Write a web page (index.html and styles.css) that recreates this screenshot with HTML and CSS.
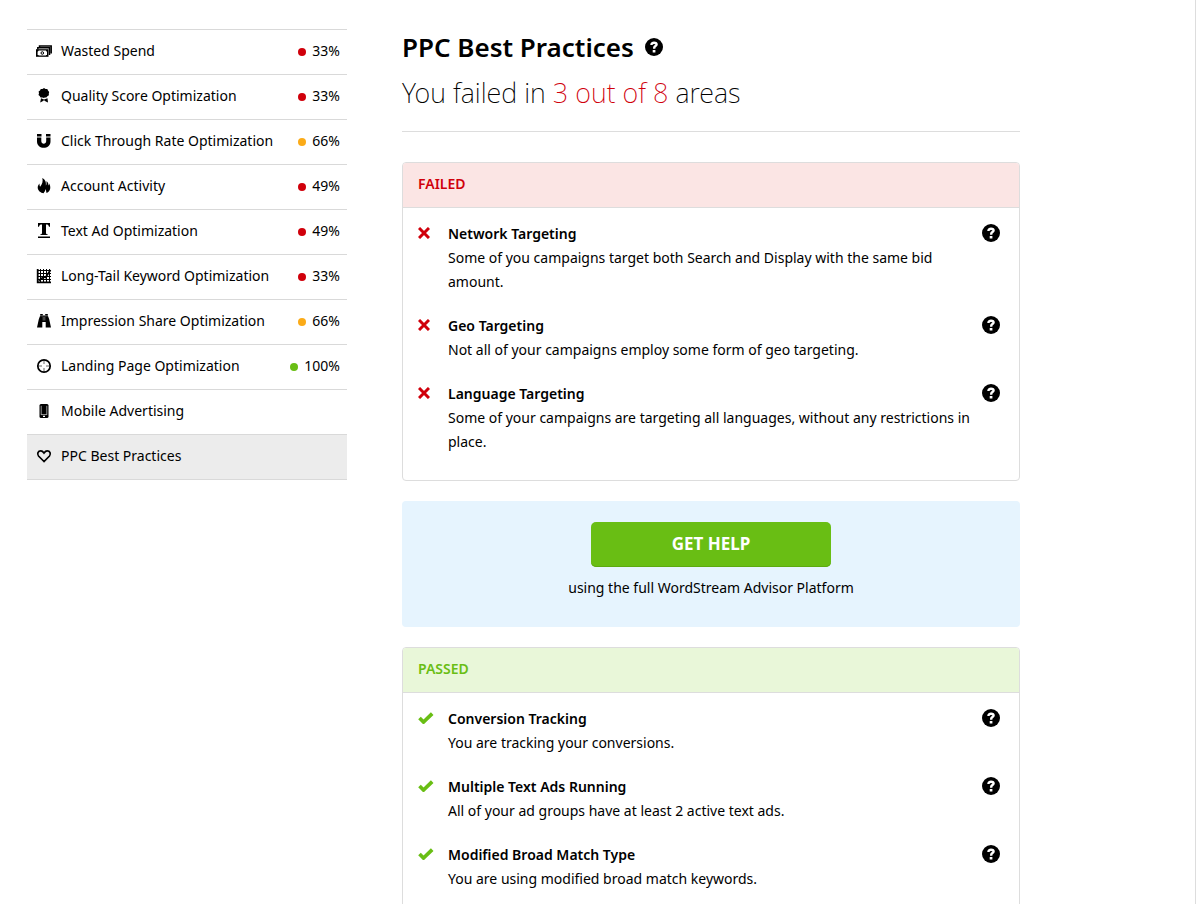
FILE: index.html
```html
<!DOCTYPE html>
<html lang="en">
<head>
<meta charset="utf-8">
<title>PPC Best Practices</title>
<link rel="stylesheet" href="styles.css">
</head>
<body>
<svg class="sprite" aria-hidden="true">
  <symbol id="help" viewBox="0 0 18 18"><circle cx="9" cy="9" r="9"/><path d="M6.500 7V6.600C6.500 5.200 7.600 4.700 9 4.700s2.600.6 2.600 1.900c0 1.500-2.400 1.500-2.400 3.300v.8" fill="none" stroke="#fff" stroke-width="2.400"/><path d="M7.700 12h2.700v2.500H7.700z" fill="#fff"/></symbol>
  <symbol id="cross" viewBox="0 0 12 12"><path d="M1 1l10 10M11 1L1 11" stroke="currentColor" stroke-width="3"/></symbol>
  <symbol id="check" viewBox="0 0 16 12"><path d="M1.500 6l4 4L14.200 1.600" fill="none" stroke="currentColor" stroke-width="3.700"/></symbol>
</svg>
<div class="page">
  <nav class="sidebar" aria-label="Report sections">
    <a class="row" href="#"><svg class="icon" viewBox="0 0 16 16"><path d="M3.500 4.500V3H15.200V10.500M1.800 6.500V4.800H13.500V12" fill="none" stroke="currentColor" stroke-width="1.500"/><path d="M0 6.200h12.500v7.600H0z"/><path d="M2.800 7.500h7l1.200 1.200v2.600l-1.200 1.200h-7l-1.200-1.200V8.700z" fill="#fff"/><circle cx="6.300" cy="10" r="1.300" fill="none" stroke="currentColor"/></svg><span class="name">Wasted Spend</span><span class="score bad">33%</span></a>
    <a class="row" href="#"><svg class="icon" viewBox="0 0 16 16"><path d="M8 0l1.500.9 1.800.1.700 1.600L13.200 4l-.4 1.600.1 1.700-1.500 1-1.100 1.300-1.600-.2L8 10l-1.700-.6-1.700.1-.9-1.400-1.200-1.100L3 5.300l-.4-1.700L4 2.600 4.800 1l1.700-.1z"/><path d="M5 10.300l3 1.200 3.500-1.200.5 4.200-2.200-1L8 12.300l-1.800 1.200-2 1z"/></svg><span class="name">Quality Score Optimization</span><span class="score bad">33%</span></a>
    <a class="row" href="#"><svg class="icon" viewBox="0 0 16 16"><path d="M1 1h4.500v2.500H1zM10 1h4.500v2.500H10z"/><path d="M1 4.500h4.300v3.500c0 3.600 4.900 3.600 4.900 0V4.500h4.300v4c0 8.400-13.500 8.400-13.500 0z"/></svg><span class="name">Click Through Rate Optimization</span><span class="score fair">66%</span></a>
    <a class="row" href="#"><svg class="icon" viewBox="0 0 16 16"><path d="M6.300 0c3.500 2 3.800 4.500 3.600 7.400.8-.7.7-2.600.5-4.200 1.900 1 1.800 2.500 1.600 4.200.8-.4.9-1.500.8-2.300 2.500 3.600 2 8.200-2.200 10-.5-1.300-.4-2.600-1-4-.3 2-1.300 3.100-2 4.200-2.900-.3-6-2.700-5.900-6 .1-1.500.9-2.700 1.600-3.900.4 1.100.2 2.300.8 3.400C6.200 6.300 7.200 3.500 6.300 0z"/></svg><span class="name">Account Activity</span><span class="score bad">49%</span></a>
    <a class="row" href="#"><svg class="icon" viewBox="0 0 16 16"><path d="M2 0h12v3.800h-1c-.4-1.900-1-2.300-3-2.300V10c0 .9.500 1.200 1.600 1.300v.7H4.400v-.7c1.100-.1 1.600-.4 1.600-1.300V1.500c-2 0-2.600.4-3 2.300H2zM2 13.500h12V15H2z"/></svg><span class="name">Text Ad Optimization</span><span class="score bad">49%</span></a>
    <a class="row" href="#"><svg class="icon" viewBox="0 0 16 16"><path d="M1.500 1v14M4.500 1v14M7.500 1v14M10.500 1v14M13.500 1v14M1 2.500h14M1 5.500h14M1 8.500h14M1 11.500h14" stroke="currentColor"/><path d="M1.700 1v13.300H15M3 12.500l4.500-3.500 2 .5L14.500 2" fill="none" stroke="currentColor" stroke-width="1.800"/></svg><span class="name">Long-Tail Keyword Optimization</span><span class="score bad">33%</span></a>
    <a class="row" href="#"><svg class="icon" viewBox="0 0 16 16"><path d="M4.200 1h2.600v1.500h2.400V1h2.600v1.500l1.400 3.700L15 14.500H9.700V9H6.300v5.500H1l1.800-8.300 1.400-3.700z"/><path d="M4 2.800h3M9 2.800h3M7.200 3.500v4M8.800 3.500v4" stroke="#fff" stroke-width=".4"/></svg><span class="name">Impression Share Optimization</span><span class="score fair">66%</span></a>
    <a class="row" href="#"><svg class="icon" viewBox="0 0 16 16"><circle cx="8" cy="8" r="6.200" fill="none" stroke="currentColor" stroke-width="1.700"/><path d="M8 2v4M8 10v4M2 8h4M10 8h4" stroke="currentColor" stroke-width=".6"/></svg><span class="name">Landing Page Optimization</span><span class="score good">100%</span></a>
    <a class="row" href="#"><svg class="icon" viewBox="0 0 16 16"><rect x="3.500" y="1" width="9" height="14" rx="1.500"/><path d="M5.200 2.800v9M10.800 2.800v9M5.200 11.600h5.600" stroke="#fff" stroke-width=".6"/><path d="M7 13.300h2" stroke="#fff" stroke-width="1.200"/></svg><span class="name">Mobile Advertising</span></a>
    <a class="row current" href="#" aria-current="page"><svg class="icon" viewBox="0 0 16 16"><path d="M8 13.500L2.500 8C.8 6 2 2.800 4.800 2.800 6.500 2.800 7.300 4 8 5c.7-1 1.500-2.200 3.200-2.200C14 2.800 15.200 6 13.500 8z" fill="none" stroke="currentColor" stroke-width="1.700"/></svg><span class="name">PPC Best Practices</span></a>
  </nav>

  <main class="content">
    <header class="heading">
      <h1>PPC Best Practices <button class="help" aria-label="About PPC Best Practices"><svg><use href="#help"/></svg></button></h1>
      <p class="summary">You failed in <span class="count">3 out of 8</span> areas</p>
    </header>

    <section class="panel failed">
      <h2>FAILED</h2>
      <ul>
        <li><svg class="mark"><use href="#cross"/></svg><div class="detail"><h3>Network Targeting</h3><p>Some of you campaigns target both Search and Display with the same bid amount.</p></div><button class="help" aria-label="About Network Targeting"><svg><use href="#help"/></svg></button></li>
        <li><svg class="mark"><use href="#cross"/></svg><div class="detail"><h3>Geo Targeting</h3><p>Not all of your campaigns employ some form of geo targeting.</p></div><button class="help" aria-label="About Geo Targeting"><svg><use href="#help"/></svg></button></li>
        <li><svg class="mark"><use href="#cross"/></svg><div class="detail"><h3>Language Targeting</h3><p>Some of your campaigns are targeting all languages, without any restrictions in place.</p></div><button class="help" aria-label="About Language Targeting"><svg><use href="#help"/></svg></button></li>
      </ul>
    </section>

    <section class="offer">
      <button class="cta">GET HELP</button>
      <p>using the full WordStream Advisor Platform</p>
    </section>

    <section class="panel passed">
      <h2>PASSED</h2>
      <ul>
        <li><svg class="mark"><use href="#check"/></svg><div class="detail"><h3>Conversion Tracking</h3><p>You are tracking your conversions.</p></div><button class="help" aria-label="About Conversion Tracking"><svg><use href="#help"/></svg></button></li>
        <li><svg class="mark"><use href="#check"/></svg><div class="detail"><h3>Multiple Text Ads Running</h3><p>All of your ad groups have at least 2 active text ads.</p></div><button class="help" aria-label="About Multiple Text Ads Running"><svg><use href="#help"/></svg></button></li>
        <li><svg class="mark"><use href="#check"/></svg><div class="detail"><h3>Modified Broad Match Type</h3><p>You are using modified broad match keywords.</p></div><button class="help" aria-label="About Modified Broad Match Type"><svg><use href="#help"/></svg></button></li>
      </ul>
    </section>
  </main>
</div>
</body>
</html>
```

FILE: styles.css
```css
* { box-sizing: border-box; }

body {
  margin: 0;
  color: #000;
  background: #fff;
  font: 14px/24px "Noto Sans", "Open Sans", sans-serif;
}

h1, h2, h3, p, ul { margin: 0; padding: 0; }
ul { list-style: none; }
button { font: inherit; border: 0; padding: 0; cursor: pointer; }
.sprite { display: none; }
svg { display: block; fill: currentColor; }

.page {
  display: flex;
  align-items: flex-start;
  gap: 55px;
  height: 100vh;
  padding: 29px 175px 0 27px;
  border-right: 1px solid #ddd;
  overflow-y: auto;
  scrollbar-width: none;
}

.sidebar {
  flex: 0 0 320px;
  border-bottom: 1px solid #d9d9d9;
}

.row {
  display: flex;
  align-items: center;
  height: 45px;
  padding: 0 7px 2px 9px;
  border-top: 1px solid #d9d9d9;
  color: inherit;
  text-decoration: none;
}
.row.current { background: #ececec; }
.icon { width: 16px; height: 16px; margin-right: 9px; }
.name { flex: 1; }

.score {
  display: flex;
  align-items: center;
  gap: 6px;
}
.score::before {
  content: "";
  width: 8px;
  height: 8px;
  margin-top: 2px;
  border-radius: 50%;
  background: currentColor;
}
.bad::before { color: #d0000b; }
.fair::before { color: #fbab18; }
.good::before { color: #69be14; }

.content { flex: 1; min-width: 0; }

.heading {
  padding-bottom: 18px;
  margin-bottom: 30px;
  border-bottom: 1px solid #ddd;
}
h1 {
  display: flex;
  align-items: center;
  gap: 11px;
  font-size: 26px;
  line-height: 36px;
  font-weight: 600;
}
.summary {
  margin-top: 8px;
  font-size: 27px;
  line-height: 40px;
  font-weight: 200;
}
.count { color: #d0000b; }

.help {
  flex: none;
  width: 18px;
  height: 18px;
  background: none;
  color: #000;
}
.help svg { width: 18px; height: 18px; }

.panel {
  margin-bottom: 20px;
  border: 1px solid #ddd;
  border-radius: 4px;
  overflow: hidden;
}
.panel h2 {
  padding: 9px 15px 11px;
  border-bottom: 1px solid #ddd;
  font-size: 14px;
  line-height: 24px;
  font-weight: 600;
}
.failed h2 { color: #d0000b; background: #fbe5e4; }
.passed h2 { color: #69be14; background: #e9f7d9; }

.panel ul {
  display: flex;
  flex-direction: column;
  gap: 20px;
  padding: 14px 19px 26px 15px;
}
.panel li { display: flex; align-items: flex-start; }
.mark { flex: none; height: 12px; margin-top: 5px; }
.failed .mark { width: 12px; margin-right: 18px; color: #d0000b; }
.passed .mark { width: 16px; margin-right: 14px; color: #69be14; }
.detail { flex: 1; padding-right: 8px; }
.detail h3 { font-size: 14px; line-height: 24px; font-weight: 600; }
.panel .help { margin-top: 2px; }

.offer {
  margin-bottom: 20px;
  padding: 21px 20px 27px;
  border-radius: 4px;
  background: #e6f4fe;
  text-align: center;
}
.cta {
  width: 240px;
  height: 45px;
  margin-bottom: 9px;
  padding-bottom: 2px;
  border-radius: 5px;
  background: #69be14;
  box-shadow: inset 0 -1px #5daa10;
  color: #fff;
  font-size: 17px;
  font-weight: 700;
  vertical-align: top;
}
```
